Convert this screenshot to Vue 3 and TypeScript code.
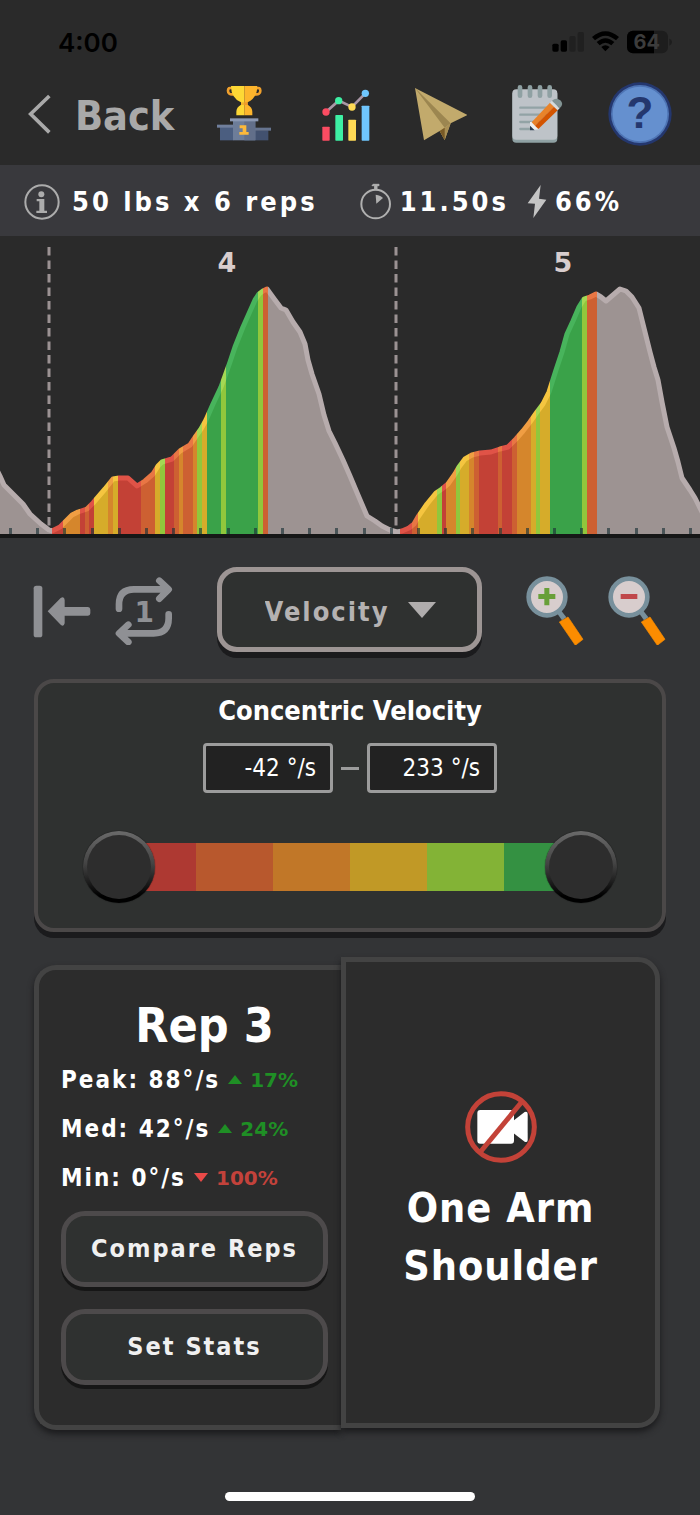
<script setup lang="ts">
import { computed, ref } from 'vue'

type Tone = 'red' | 'rust' | 'amber' | 'yellow' | 'lime' | 'green' | 'gray'
type Band = [end: number, tone: Tone]

const fills: Record<Tone, string> = {
  red: '#c34136', rust: '#cd6032', amber: '#d5862c', yellow: '#d6ac2a',
  lime: '#91c73c', green: '#3aa249', gray: '#9d9392',
}
const edges: Record<Tone, string> = {
  red: '#e05347', rust: '#e87644', amber: '#f09e43', yellow: '#f5c540',
  lime: '#a4d854', green: '#48b45c', gray: '#b7acad',
}

const chartWidth = 700
const baseline = 298

const bands: Band[] = [
  [52, 'gray'], [63, 'red'], [80, 'amber'], [85, 'red'], [89, 'rust'], [94, 'red'],
  [108, 'yellow'], [113, 'amber'], [118, 'yellow'], [141, 'red'], [155, 'rust'],
  [160, 'yellow'], [165, 'lime'], [174, 'red'], [179, 'rust'], [183, 'amber'],
  [193, 'rust'], [197, 'amber'], [202, 'lime'], [207, 'yellow'], [221, 'green'],
  [226, 'lime'], [258, 'green'], [263, 'lime'], [268, 'rust'], [400, 'gray'],
  [412, 'red'], [418, 'rust'], [437, 'yellow'], [442, 'lime'], [446, 'red'],
  [456, 'amber'], [460, 'lime'], [469, 'yellow'], [474, 'amber'], [479, 'rust'],
  [498, 'red'], [502, 'rust'], [512, 'red'], [517, 'rust'], [531, 'amber'],
  [536, 'yellow'], [540, 'lime'], [550, 'yellow'], [582, 'green'], [587, 'lime'],
  [597, 'rust'], [700, 'gray'],
]

const curve: [number, number][] = [
  [-4, 232], [0, 240], [4, 249], [13, 258], [23, 268], [30, 278], [41, 288], [49, 294],
  [52, 295], [60, 291], [66, 285], [72, 279], [78, 276], [87, 273], [93, 267], [105, 253],
  [113, 243], [119, 242], [128, 242], [137, 250], [145, 245], [153, 238], [158, 230],
  [162, 226], [172, 223], [180, 215], [190, 209], [196, 200], [201, 193], [206, 184],
  [213, 168], [221, 151], [225, 140], [230, 126], [235, 111], [243, 91], [251, 73],
  [255, 64], [259, 58], [263, 55], [267, 53], [275, 64], [281, 72], [286, 74], [293, 86],
  [300, 96], [305, 108], [308, 124], [312, 138], [319, 158], [324, 179], [329, 195],
  [335, 207], [343, 224], [350, 240], [358, 259], [367, 280], [375, 285], [382, 290],
  [390, 294], [397, 296], [402, 295], [409, 292], [414, 288], [418, 281], [427, 268],
  [436, 257], [442, 253], [448, 248], [455, 238], [459, 231], [465, 223], [472, 219],
  [480, 217], [491, 216], [500, 213], [508, 211], [516, 203], [523, 195], [530, 186],
  [537, 176], [543, 168], [549, 156], [556, 134], [562, 116], [567, 98], [573, 85],
  [579, 71], [584, 63], [590, 61], [596, 58], [601, 61], [606, 65], [613, 59], [620, 53],
  [626, 55], [632, 61], [639, 72], [644, 92], [650, 116], [654, 131], [658, 144],
  [662, 166], [667, 191], [674, 212], [678, 226], [682, 242], [690, 254], [695, 262],
  [704, 280],
]

const linePath = 'M' + curve.map(p => p.join(' ')).join('L')
const areaPath = `${linePath}V${baseline}H-4Z`

const stops = bands.flatMap(([end, tone], i) => {
  const start = i === 0 ? 0 : bands[i - 1][0]
  return [
    { offset: start / chartWidth, tone },
    { offset: end / chartWidth, tone },
  ]
})

const ticks = Array.from({ length: 26 }, (_, i) => Math.round(10 + i * 27.2))

const repMarks = [
  { rep: 4, labelX: 227, startX: 49 },
  { rep: 5, labelX: 563, startX: 396 },
]

const metrics = ['Velocity', 'Acceleration', 'Position']
const metric = ref('Velocity')

const rangeMin = -42
const rangeMax = 233
const low = ref(rangeMin)
const high = ref(rangeMax)
const lowText = computed(() => `${low.value} °/s`)
const highText = computed(() => `${high.value} °/s`)

const stats = [
  { label: 'Peak', value: '88°/s', change: '17%', up: true },
  { label: 'Med', value: '42°/s', change: '24%', up: true },
  { label: 'Min', value: '0°/s', change: '100%', up: false },
]
</script>

<template>
  <main class="app">
    <header class="top">
      <div class="status">
        <span class="clock">4:00</span>
        <div class="status-icons">
          <svg width="32" height="22" viewBox="604 94 96 66" aria-hidden="true">
            <rect x="605" y="132" width="19" height="24" rx="5" fill="#000" />
            <rect x="630" y="122" width="19" height="34" rx="5" fill="#000" />
            <rect x="656" y="109" width="19" height="47" rx="5" fill="#202020" />
            <rect x="681" y="97" width="19" height="59" rx="5" fill="#202020" />
          </svg>
          <svg width="27" height="22" viewBox="724 94 81 66" aria-hidden="true">
            <path d="M724 112Q764 78 805 112L796 122Q764 94 733 122ZM738 127Q764 104 791 127L782 137Q764 121 747 137ZM752 142Q764 132 777 142L764 155Z" fill="#000" />
          </svg>
          <svg width="45" height="24" viewBox="828 90 135 72" aria-hidden="true">
            <rect x="828" y="92" width="123" height="68" rx="18" fill="#1d1d1d" />
            <path d="M846 92H909V160H846A18 18 0 0 1 828 142V110A18 18 0 0 1 846 92Z" fill="#000" />
            <path d="M955 116Q963 118 963 126T955 137Z" fill="#1d1d1d" />
            <text x="887" y="147" text-anchor="middle" class="battery-text">64</text>
          </svg>
        </div>
      </div>
      <nav class="nav">
        <button class="back" type="button">
          <svg width="24" height="40" viewBox="80 280 72 120" aria-hidden="true">
            <path d="M147 286L91 340L147 395" fill="none" stroke="#a9a9a9" stroke-width="11" />
          </svg>
          <span>Back</span>
        </button>
        <div class="tools">
          <button type="button" aria-label="Leaderboard">
            <svg width="54" height="58" viewBox="655 254 162 174">
              <path d="M700 264Q688 260 688 271Q688 284 704 282M773 264Q785 260 785 271Q785 284 769 282" fill="none" stroke="#f0a02c" stroke-width="8" />
              <path d="M697 257H737V345H713V334Q713 321 727 313V306Q697 293 697 257Z" fill="#fdd835" />
              <path d="M737 257H776Q776 293 747 306V313Q761 321 761 334V345H737Z" fill="#fdb52c" />
              <path d="M727 306H737V314H727Z" fill="#f2b52c" /><path d="M737 306H747V314H737Z" fill="#f09a2a" />
              <path d="M664 380H704V420H664Z" fill="#4b5e80" /><path d="M769 390H809V420H769Z" fill="#42516f" />
              <path d="M655 373H704V382H655Z" fill="#707f9c" /><path d="M769 382H817V391H769Z" fill="#66748f" />
              <path d="M703 362H770V420H703Z" fill="#6d7d99" /><path d="M737 362H770V420H737Z" fill="#626f8a" />
              <path d="M694 354H779V363H694Z" fill="#8b98b3" />
              <path d="M723 375H743V395H750V403H722V395H732V384H723Z" fill="#fdb93a" />
            </svg>
          </button>
          <button type="button" aria-label="Charts">
            <svg width="54" height="58" viewBox="953 256 162 174">
              <path d="M983 337L1021 303L1061 322L1101 281" fill="none" stroke="#a996a5" stroke-width="8" />
              <rect x="972" y="381" width="22" height="42" rx="2" fill="#fb4c62" />
              <rect x="1011" y="346" width="23" height="77" rx="2" fill="#3df0a4" />
              <rect x="1050" y="360" width="23" height="63" rx="2" fill="#ffda55" />
              <rect x="1090" y="318" width="23" height="105" rx="2" fill="#6fc6fd" />
              <circle cx="983" cy="337" r="11" fill="#fb4c62" /><circle cx="1021" cy="303" r="11" fill="#3df0a4" />
              <circle cx="1061" cy="322" r="11" fill="#ffda55" /><circle cx="1101" cy="281" r="11" fill="#6fc6fd" />
            </svg>
          </button>
          <button type="button" aria-label="Send">
            <svg width="52" height="58" viewBox="198 252 156 174">
              <path d="M198 261L355 342L305 367L287 417L272 390L225 418Z" fill="#c2aa6c" />
              <path d="M198 261L305 367L287 380Z" fill="#9c8650" />
              <path d="M287 380L305 367L287 417L272 390Z" fill="#a98f55" />
              <path d="M287 380L272 390L287 417Z" fill="#795a26" />
            </svg>
          </button>
          <button type="button" aria-label="Notes">
            <svg width="51" height="58" viewBox="489 253 153 174">
              <rect x="490" y="270" width="135" height="156" rx="12" fill="#8fa1a3" />
              <rect x="490" y="266" width="135" height="151" rx="12" fill="#bec3c8" />
              <path d="M514 321H603M514 342H592M514 364H572M514 385H545" stroke="#92a3a5" stroke-width="7" stroke-linecap="round" />
              <path d="M513 260V285M543 260V285M573 260V285M602 260V285" stroke="#8fa1a3" stroke-width="14" stroke-linecap="round" />
              <path d="M543 364L549 363L570 386L543 389Z" fill="#ecf0f1" />
              <path d="M543 375L543 389L557 389Z" fill="#2c3e50" />
              <path d="M548 365L603 306L615 318L558 375Z" fill="#e8832a" /><path d="M558 375L615 318L626 329L568 385Z" fill="#d35400" />
              <path d="M603 306L609 300L632 323L626 329Z" fill="#d5dbdc" />
              <path d="M609 300Q621 289 634 299Q646 311 632 323Z" fill="#829494" />
            </svg>
          </button>
          <button type="button" aria-label="Help">
            <svg width="64" height="64" viewBox="776 243 192 192">
              <circle cx="872" cy="339" r="95" fill="#24376e" /><circle cx="872" cy="339" r="87" fill="#4e74b4" /><circle cx="872" cy="339" r="82" fill="#6590cf" />
              <text x="872" y="382" text-anchor="middle" class="help-mark">?</text>
            </svg>
          </button>
        </div>
      </nav>
    </header>

    <section class="summary" aria-label="Set summary">
      <div class="fact weight">
        <svg width="36" height="36" viewBox="72 546 108 108" aria-hidden="true">
          <circle cx="126" cy="600" r="50" fill="none" stroke="#acacac" stroke-width="6" />
          <circle cx="124" cy="577" r="9" fill="#acacac" />
          <path d="M110 591H133V626H141V633H109V626H118V598H110Z" fill="#acacac" />
        </svg>
        <span>50 lbs x 6 reps</span>
      </div>
      <div class="fact">
        <svg width="32" height="38" viewBox="40 545 96 114" aria-hidden="true">
          <circle cx="87" cy="608" r="43" fill="none" stroke="#b0b0b0" stroke-width="6" />
          <path d="M79 549H97V553H91V565H84V553H76Z" fill="#b0b0b0" stroke="#b0b0b0" stroke-width="3" stroke-linejoin="round" />
          <path d="M87 580Q103 582 109 590L89 607Z" fill="#b0b0b0" />
        </svg>
        <span>11.50s</span>
      </div>
      <div class="fact">
        <svg width="20" height="38" viewBox="544 547 60 114" aria-hidden="true">
          <path d="M585 553L546 608L568 609L563 652L602 597L580 594Z" fill="#c4c4c4" />
        </svg>
        <span>66%</span>
      </div>
    </section>

    <svg class="chart" viewBox="0 0 700 302" role="img" aria-label="Velocity per rep">
      <defs>
        <linearGradient id="band-fill" gradientUnits="userSpaceOnUse" x1="0" y1="0" :x2="chartWidth" y2="0">
          <stop v-for="(s, i) in stops" :key="i" :offset="s.offset" :stop-color="fills[s.tone]" />
        </linearGradient>
        <linearGradient id="band-edge" gradientUnits="userSpaceOnUse" x1="0" y1="0" :x2="chartWidth" y2="0">
          <stop v-for="(s, i) in stops" :key="i" :offset="s.offset" :stop-color="edges[s.tone]" />
        </linearGradient>
      </defs>
      <path :d="areaPath" fill="url(#band-fill)" />
      <path :d="linePath" fill="none" stroke="url(#band-edge)" stroke-width="5" stroke-linejoin="round" />
      <rect v-for="t in ticks" :key="t" :x="t - 1" y="292" width="3" height="6" fill="#1b3338" fill-opacity=".65" />
      <g v-for="m in repMarks" :key="m.rep">
        <line :x1="m.startX" y1="11" :x2="m.startX" y2="290" stroke="#9b9293" stroke-width="3" stroke-dasharray="8.5 5" />
        <text :x="m.labelX" y="36" text-anchor="middle" class="rep-label">{{ m.rep }}</text>
      </g>
      <rect x="0" y="298" width="700" height="4" fill="#161717" />
    </svg>

    <section class="controls">
      <div class="group">
        <button type="button" aria-label="Jump to start">
          <svg width="58" height="70" viewBox="98 75 174 210">
            <rect x="100" y="107" width="26" height="155" rx="8" fill="#8f9094" />
            <path d="M142 184L181 144Q192 138 193 150V171H263Q270 172 270 179V190Q270 197 263 197H193V220Q190 232 181 224Z" fill="#8f9094" />
          </svg>
        </button>
        <button type="button" aria-label="Repeat one">
          <svg width="58" height="70" viewBox="346 75 174 210">
            <g fill="none" stroke="#8f9094" stroke-linecap="round" stroke-linejoin="round" stroke-width="20">
              <path d="M358 176V163Q358 118 403 118H500M479 92L507 118L479 146" />
              <path d="M507 193V205Q507 250 462 250H364M386 224L358 250L386 276" />
            </g>
            <text x="434" y="215" text-anchor="middle" class="loop-mark">1</text>
          </svg>
        </button>
      </div>
      <div class="picker">
        <select v-model="metric" aria-label="Metric">
          <option v-for="m in metrics" :key="m">{{ m }}</option>
        </select>
        <svg width="28" height="16" viewBox="0 0 28 16" aria-hidden="true"><path d="M0 0H28L14 16Z" fill="#b0adad" /></svg>
      </div>
      <div class="group">
        <button v-for="kind in ['in', 'out']" :key="kind" type="button" :aria-label="`Zoom ${kind}`">
          <svg width="58" height="70" viewBox="527 75 174 210">
            <path d="M618 187L631 180L648 202L635 211Z" fill="#78909c" />
            <circle cx="590" cy="141" r="55" fill="#d8cdcd" stroke="#78909c" stroke-width="14" />
            <path d="M627 216L653 201L698 268L675 286Z" fill="#fb8c00" stroke="#fb8c00" stroke-width="2" stroke-linejoin="round" />
            <path v-if="kind === 'in'" d="M582 114H597V132H615V147H597V166H582V147H564V132H582Z" fill="#689f38" />
            <path v-else d="M565 132H615V147H565Z" fill="#c0474a" />
          </svg>
        </button>
      </div>
    </section>

    <section class="card">
      <h2>Concentric Velocity</h2>
      <div class="limits">
        <input type="text" :value="lowText" aria-label="Lowest velocity" />
        <span class="dash"></span>
        <input type="text" :value="highText" aria-label="Highest velocity" />
      </div>
      <div class="slider">
        <div class="scale"><i class="red"></i><i class="rust"></i><i class="amber"></i><i class="yellow"></i><i class="lime"></i><i class="green"></i></div>
        <input v-model.number="low" type="range" :min="rangeMin" :max="rangeMax" aria-label="Lower limit" />
        <input v-model.number="high" type="range" :min="rangeMin" :max="rangeMax" aria-label="Upper limit" />
      </div>
    </section>

    <section class="detail">
      <article class="rep">
        <h1>Rep 3</h1>
        <p v-for="s in stats" :key="s.label" class="stat">
          <span>{{ s.label }}: {{ s.value }}</span>
          <svg width="14" height="9" viewBox="0 0 14 9" aria-hidden="true">
            <path :d="s.up ? 'M0 9H14L7 0Z' : 'M0 0H14L7 9Z'" :fill="s.up ? '#1f8f25' : '#ea4a48'" />
          </svg>
          <span class="change" :class="{ down: !s.up }">{{ s.change }}</span>
        </p>
        <button type="button" class="action">Compare Reps</button>
        <button type="button" class="action">Set Stats</button>
      </article>
      <article class="exercise">
        <svg width="72" height="72" viewBox="342 423 216 216" role="img" aria-label="No video">
          <rect x="379" y="480" width="110" height="101" rx="9" fill="#fff" />
          <path d="M487 512L521 486Q530 483 530 492V570Q530 579 521 575L487 549Z" fill="#fff" />
          <path d="M388 606L512 456" stroke="#c34238" stroke-width="15" />
          <circle cx="450" cy="531" r="100" fill="none" stroke="#c34238" stroke-width="15" />
        </svg>
        <h2>One Arm<br />Shoulder</h2>
      </article>
    </section>

    <div class="home"></div>
  </main>
</template>

<style>
body {
  margin: 0;
  background: #333436;
}
</style>

<style scoped>
.app {
  box-sizing: border-box;
  min-height: 100vh;
  display: flex;
  flex-direction: column;
  padding-bottom: 14px;
  background: #333436;
  color: #fff;
  font-family: 'DejaVu Sans Condensed', 'DejaVu Sans', sans-serif;
  font-weight: 700;
}
svg {
  display: block;
  flex: none;
}
button {
  padding: 0;
  border: 0;
  background: none;
  color: inherit;
  font: inherit;
  cursor: pointer;
}
h1, h2, p {
  margin: 0;
}
.top {
  height: 165px;
  background: #2a2a2a;
}
.status {
  display: flex;
  justify-content: space-between;
  align-items: center;
  padding: 24px 28px 0 58px;
  height: 36px;
  color: #000;
}
.clock {
  font: 600 26px Inter, sans-serif;
}
.status-icons {
  display: flex;
  align-items: center;
  gap: 8px;
}
.battery-text {
  font: 700 60px Inter, sans-serif;
  fill: #3c3c3c;
}
.nav {
  display: flex;
  justify-content: space-between;
  align-items: center;
  height: 64px;
  margin-top: 22px;
  padding: 0 28px 0 27px;
}
.back {
  display: flex;
  align-items: center;
  gap: 24px;
  color: #a9a9a9;
  font-size: 41px;
}
.back span {
  padding-top: 4px;
}
.tools {
  display: flex;
  align-items: center;
  gap: 45px;
}
.help-mark {
  font: 700 132px 'Liberation Sans', sans-serif;
  fill: #24376e;
}
.summary {
  display: flex;
  align-items: center;
  gap: 18px;
  height: 71px;
  padding: 2px 24px 0;
  box-sizing: border-box;
  background: #39393d;
  font-size: 27px;
  letter-spacing: 3px;
}
.fact {
  display: flex;
  align-items: center;
  gap: 8px;
}
.weight {
  gap: 12px;
  margin-right: 24px;
}
.chart {
  width: 100%;
  background: #2a2a2a;
}
.rep-label {
  font-family: 'DejaVu Sans', sans-serif;
  font-size: 27px;
  fill: #d8cdcd;
}
.controls {
  display: flex;
  justify-content: space-between;
  align-items: center;
  margin: 29px 34px 0 33px;
}
.group {
  display: flex;
  gap: 24px;
}
.loop-mark {
  font-family: 'DejaVu Sans', sans-serif;
  font-size: 84px;
  fill: #8f9094;
}
.picker {
  display: grid;
  align-items: center;
  width: 42%;
}
.picker > * {
  grid-area: 1 / 1;
}
.picker select {
  appearance: none;
  width: 100%;
  height: 85px;
  padding: 4px 72px 0 43px;
  border: 5px solid #9d9594;
  border-radius: 20px;
  background: #2f3130;
  box-shadow: 0 6px 0 #1b1b1d;
  color: #b5b2b2;
  font: inherit;
  font-size: 27px;
  letter-spacing: 2px;
}
.picker svg {
  justify-self: end;
  margin-right: 46px;
  pointer-events: none;
}
.card {
  display: flex;
  flex-direction: column;
  align-items: center;
  margin: 27px 34px 0;
  padding: 11px 45px 25px;
  border: 4px solid #4b4848;
  border-radius: 20px;
  background: #2f3130;
  box-shadow: 0 6px 0 #1b1b1d;
}
.card h2 {
  font-size: 27px;
  line-height: 34px;
}
.limits {
  display: flex;
  align-items: center;
  gap: 8px;
  margin-top: 15px;
}
.limits input {
  box-sizing: border-box;
  width: 130px;
  height: 50px;
  padding: 0 14px;
  border: 3px solid #9c9c9c;
  border-radius: 4px;
  background: #222;
  color: #fff;
  font: 400 24px 'DejaVu Sans Condensed', 'DejaVu Sans', sans-serif;
  text-align: right;
}
.dash {
  width: 18px;
  height: 3px;
  background: #9c9c9c;
}
.slider {
  display: grid;
  align-items: center;
  width: 100%;
  margin-top: 38px;
}
.slider > * {
  grid-area: 1 / 1;
}
.scale {
  display: flex;
  height: 48px;
  margin: 0 36px;
}
.scale i {
  flex: 1;
}
.red { background: #ae3932; }
.rust { background: #b8582d; }
.amber { background: #c17728; }
.yellow { background: #c19926; }
.lime { background: #83b336; }
.green { background: #349142; }
.slider input {
  appearance: none;
  width: 100%;
  height: 72px;
  margin: 0;
  background: none;
  pointer-events: none;
}
.slider input::-webkit-slider-thumb {
  appearance: none;
  box-sizing: border-box;
  width: 72px;
  height: 72px;
  border: 4px solid transparent;
  border-radius: 50%;
  background: linear-gradient(#2d2d2d, #2d2d2d) padding-box, linear-gradient(#6a6a6a, #444 45%, #000 90%) border-box;
  box-shadow: 0 0 1px #000;
  pointer-events: auto;
}
.detail {
  display: grid;
  grid-template-columns: 307fr 319fr;
  margin: 25px 40px 0 34px;
}
.rep,
.exercise {
  border: 5px solid #434343;
  background: #2c2c2c;
  box-shadow: 0 4px 6px #1b1b1d;
}
.rep {
  margin-top: 8px;
  padding: 25px 13px 40px 22px;
  border-right: 0;
  border-radius: 22px 0 0 22px;
}
.rep h1 {
  padding-left: 20px;
  font-size: 48px;
  line-height: 60px;
  text-align: center;
}
.stat {
  display: flex;
  align-items: center;
  gap: 8px;
  height: 49px;
  font-size: 24px;
  letter-spacing: 2px;
}
.change {
  color: #1f8f25;
  font-family: 'DejaVu Sans', sans-serif;
  font-size: 20px;
  letter-spacing: 0;
}
.change.down {
  color: #c3423b;
}
.action {
  display: block;
  box-sizing: border-box;
  width: 100%;
  height: 76px;
  margin-top: 9px;
  padding-bottom: 2px;
  border: 5px solid #4d4a4b;
  border-radius: 24px;
  background: #2f3130;
  box-shadow: 0 4px 0 #161616;
  color: #f0f0f0;
  font-size: 25px;
  letter-spacing: 2px;
}
.action + .action {
  margin-top: 22px;
}
.exercise {
  display: flex;
  flex-direction: column;
  align-items: center;
  justify-content: center;
  gap: 16px;
  margin-bottom: 2px;
  border-radius: 0 22px 22px 0;
  text-align: center;
}
.exercise h2 {
  font-size: 41px;
  line-height: 58px;
  letter-spacing: 1px;
}
.home {
  width: 250px;
  height: 9px;
  margin: auto auto 0;
  border-radius: 5px;
  background: #fff;
}
</style>
